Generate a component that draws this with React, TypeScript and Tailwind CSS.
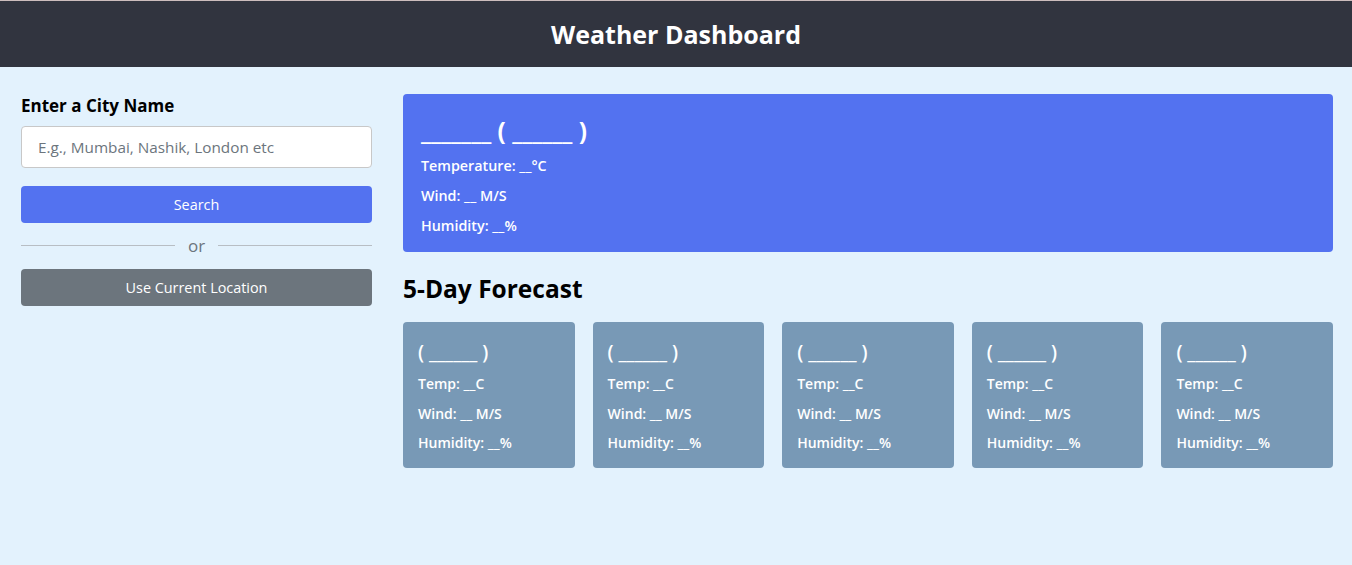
const Forecast = () => (
  <div className="flex h-[146px] flex-1 flex-col rounded bg-[#7899b6] px-[15px] pt-[17px] text-white">
    <h3 className="text-[19px] font-semibold leading-[26px]">( ______ )</h3>
    <p className="mt-[9px] text-sm font-semibold leading-[20px]">Temp: __C</p>
    <p className="mt-[10px] text-sm font-semibold leading-[20px]">Wind: __ M/S</p>
    <p className="mt-[9px] text-sm font-semibold leading-[20px]">Humidity: __%</p>
  </div>
);

export default function App() {
  const days = [1, 2, 3, 4, 5];

  return (
    <div className="min-h-[565px] bg-[#e3f2fd] font-['Open_Sans',sans-serif]">
      <h1 className="flex h-[67px] items-center justify-center border-t border-[#cdbdbd] bg-[#31343f] pt-[2px] text-[25px] font-bold text-white">
        Weather Dashboard
      </h1>
      <div className="flex gap-[31px] pl-[21px] pr-[19px] pt-[27px]">
        <div className="w-[351px]">
          <h3 className="text-[17px] font-bold leading-6 text-black">Enter a City Name</h3>
          <input
            type="text"
            placeholder="E.g., Mumbai, Nashik, London etc"
            className="mt-[8px] h-[42px] w-full rounded border border-[#c8c8c8] bg-white px-4 text-[15.3px] text-black outline-none placeholder:text-[#6c757d]"
          />
          <button className="mt-[18px] h-[37px] w-full rounded-sm bg-[#5372f0] text-[14.4px] text-white">
            Search
          </button>
          <div className="my-[5px] flex items-center gap-[13px]">
            <hr className="flex-1 border-[#b8bec4]" />
            <span className="text-[17px] leading-[35px] text-[#6c757d]">or</span>
            <hr className="flex-1 border-[#b8bec4]" />
          </div>
          <button className="mt-px h-[37px] w-full rounded-sm bg-[#6c757d] text-[14.4px] text-white">
            Use Current Location
          </button>
        </div>
        <div className="flex-1">
          <div className="h-[158px] rounded bg-[#5372f0] px-[18px] pt-[22px] text-white">
            <h2 className="text-[24.4px] font-bold leading-[30px]">_______ ( ______ )</h2>
            <p className="mt-[10px] text-[14.3px] font-semibold leading-[20px]">Temperature: __°C</p>
            <p className="mt-[10px] text-[14.3px] font-semibold leading-[20px]">Wind: __ M/S</p>
            <p className="mt-[10px] text-[14.3px] font-semibold leading-[20px]">Humidity: __%</p>
          </div>
          <h2 className="mt-[20px] text-[24.5px] font-bold leading-[34px] text-black">5-Day Forecast</h2>
          <div className="mt-[16px] flex gap-[18px]">
            {days.map((d) => (
              <Forecast key={d} />
            ))}
          </div>
        </div>
      </div>
    </div>
  );
}
